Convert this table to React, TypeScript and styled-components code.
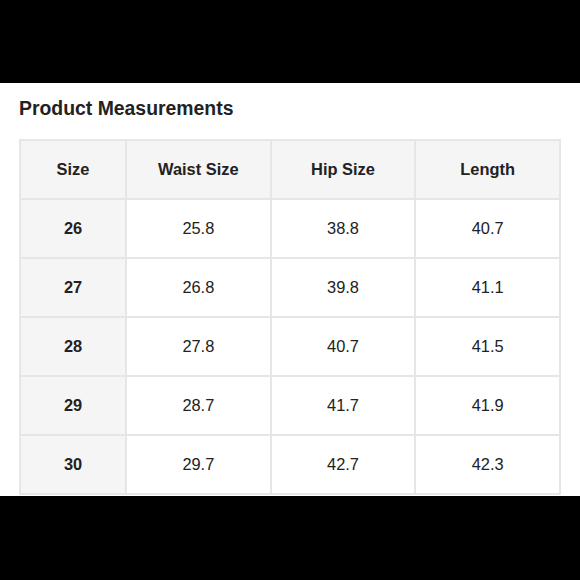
import styled, { createGlobalStyle } from "styled-components"

const GlobalStyle = createGlobalStyle`
  html, body {
    margin: 0;
    padding: 0;
    background: #000;
  }
  body {
    width: 580px;
    height: 580px;
    overflow: hidden;
    font-family: "Liberation Sans", Arial, sans-serif;
  }
`

const Frame = styled.div`
  padding-top: 83px;
  height: 580px;
  box-sizing: border-box;
  background: #000;
`

const Panel = styled.section`
  background: #fff;
  height: 413px;
  overflow: hidden;
  padding: 13px 19px 0;
  box-sizing: border-box;
`

const Title = styled.h2`
  margin: 0 0 19px;
  font-size: 19.4px;
  line-height: 24px;
  font-weight: 700;
  color: #222;
`

const Grid = styled.div`
  display: grid;
  grid-template-columns: 104px repeat(3, 1fr);
  grid-auto-rows: 57px;
  gap: 2px;
  padding: 2px;
  width: 542px;
  box-sizing: border-box;
  background: #e6e6e6;
`

const Cell = styled.div<{ $shaded?: boolean; $bold?: boolean }>`
  display: flex;
  align-items: center;
  justify-content: center;
  background: ${p => (p.$shaded ? "#f5f5f5" : "#fff")};
  font-size: 16.4px;
  font-weight: ${p => (p.$bold ? 700 : 400)};
  color: #222;
`

const headers = ["Size", "Waist Size", "Hip Size", "Length"]

const rows = [
  ["26", "25.8", "38.8", "40.7"],
  ["27", "26.8", "39.8", "41.1"],
  ["28", "27.8", "40.7", "41.5"],
  ["29", "28.7", "41.7", "41.9"],
  ["30", "29.7", "42.7", "42.3"],
]

export default function App() {
  return (
    <>
      <GlobalStyle />
      <Frame>
        <Panel>
          <Title>Product Measurements</Title>
          <Grid>
            {headers.map(h => (
              <Cell key={h} $shaded $bold>
                {h}
              </Cell>
            ))}
            {rows.map(r =>
              r.map((v, i) => (
                <Cell key={r[0] + "-" + i} $shaded={i === 0} $bold={i === 0}>
                  {v}
                </Cell>
              ))
            )}
          </Grid>
        </Panel>
      </Frame>
    </>
  )
}
